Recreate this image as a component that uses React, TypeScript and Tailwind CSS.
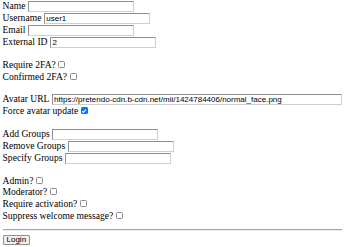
import React from 'react'

const inputCls =
  "h-[11px] border border-t-[#8f8f8f] border-l-[#8f8f8f] border-r-[#cfcfcf] border-b-[#cfcfcf] bg-white px-[1.5px] font-['Liberation_Sans',Arial,sans-serif] text-[8px] leading-[9px] text-black outline-none"

function TextRow({ label, value = '', w = 'w-[106px]' }: { label: string; value?: string; w?: string }) {
  return (
    <div className="flex h-[12px] items-start">
      <span className="leading-[9px] whitespace-pre">{label} </span>
      <input className={`${inputCls} ${w}`} defaultValue={value} readOnly />
    </div>
  )
}

function Check({ checked = false }: { checked?: boolean }) {
  if (checked) {
    return (
      <span className="ml-[2.5px] mt-[1px] inline-flex h-[7px] w-[7px] items-center justify-center rounded-[1.5px] bg-[#0075ff]">
        <svg viewBox="0 0 10 10" className="h-[6px] w-[6px]">
          <path d="M1.8 5.2 L4 7.3 L8.3 2.6" fill="none" stroke="white" strokeWidth="1.8" />
        </svg>
      </span>
    )
  }
  return <span className="ml-[2.5px] mt-[1px] inline-block h-[7px] w-[7px] rounded-[1.5px] border border-[#8a8a8a] bg-white" />
}

function CheckRow({ label, checked }: { label: string; checked?: boolean }) {
  return (
    <div className="flex h-[11.7px] items-start">
      <span className="leading-[9px] whitespace-pre">{label}</span>
      <Check checked={checked} />
    </div>
  )
}

const Blank = () => <div className="h-[10.8px]" />

export default function App() {
  return (
    <div className="min-h-screen bg-white pl-[2.5px] pr-[3px] pt-[1.3px] font-['Liberation_Serif','Times_New_Roman',serif] text-[9.6px] text-black">
      <TextRow label="Name" />
      <TextRow label="Username" value="user1" />
      <TextRow label="Email" />
      <TextRow label="External ID" value="2" />
      <Blank />
      <CheckRow label="Require 2FA?" />
      <CheckRow label="Confirmed 2FA?" />
      <Blank />
      <TextRow
        label="Avatar URL"
        value="https://pretendo-cdn.b-cdn.net/mii/1424784406/normal_face.png"
        w="w-[292px]"
      />
      <CheckRow label="Force avatar update" checked />
      <Blank />
      <TextRow label="Add Groups" />
      <TextRow label="Remove Groups" />
      <TextRow label="Specify Groups" />
      <Blank />
      <CheckRow label="Admin?" />
      <CheckRow label="Moderator?" />
      <CheckRow label="Require activation?" />
      <CheckRow label="Suppress welcome message?" />
      <div className="mt-[6.5px] border-t border-t-[#a5a5a5] border-b border-b-[#ececec]" />
      <button className="mt-[4px] h-[10.5px] rounded-[1px] border border-[#8f8f8f] bg-[#efefef] px-[3px] font-['Liberation_Sans',Arial,sans-serif] text-[8px] leading-[8px] text-black">
        Login
      </button>
    </div>
  )
}
